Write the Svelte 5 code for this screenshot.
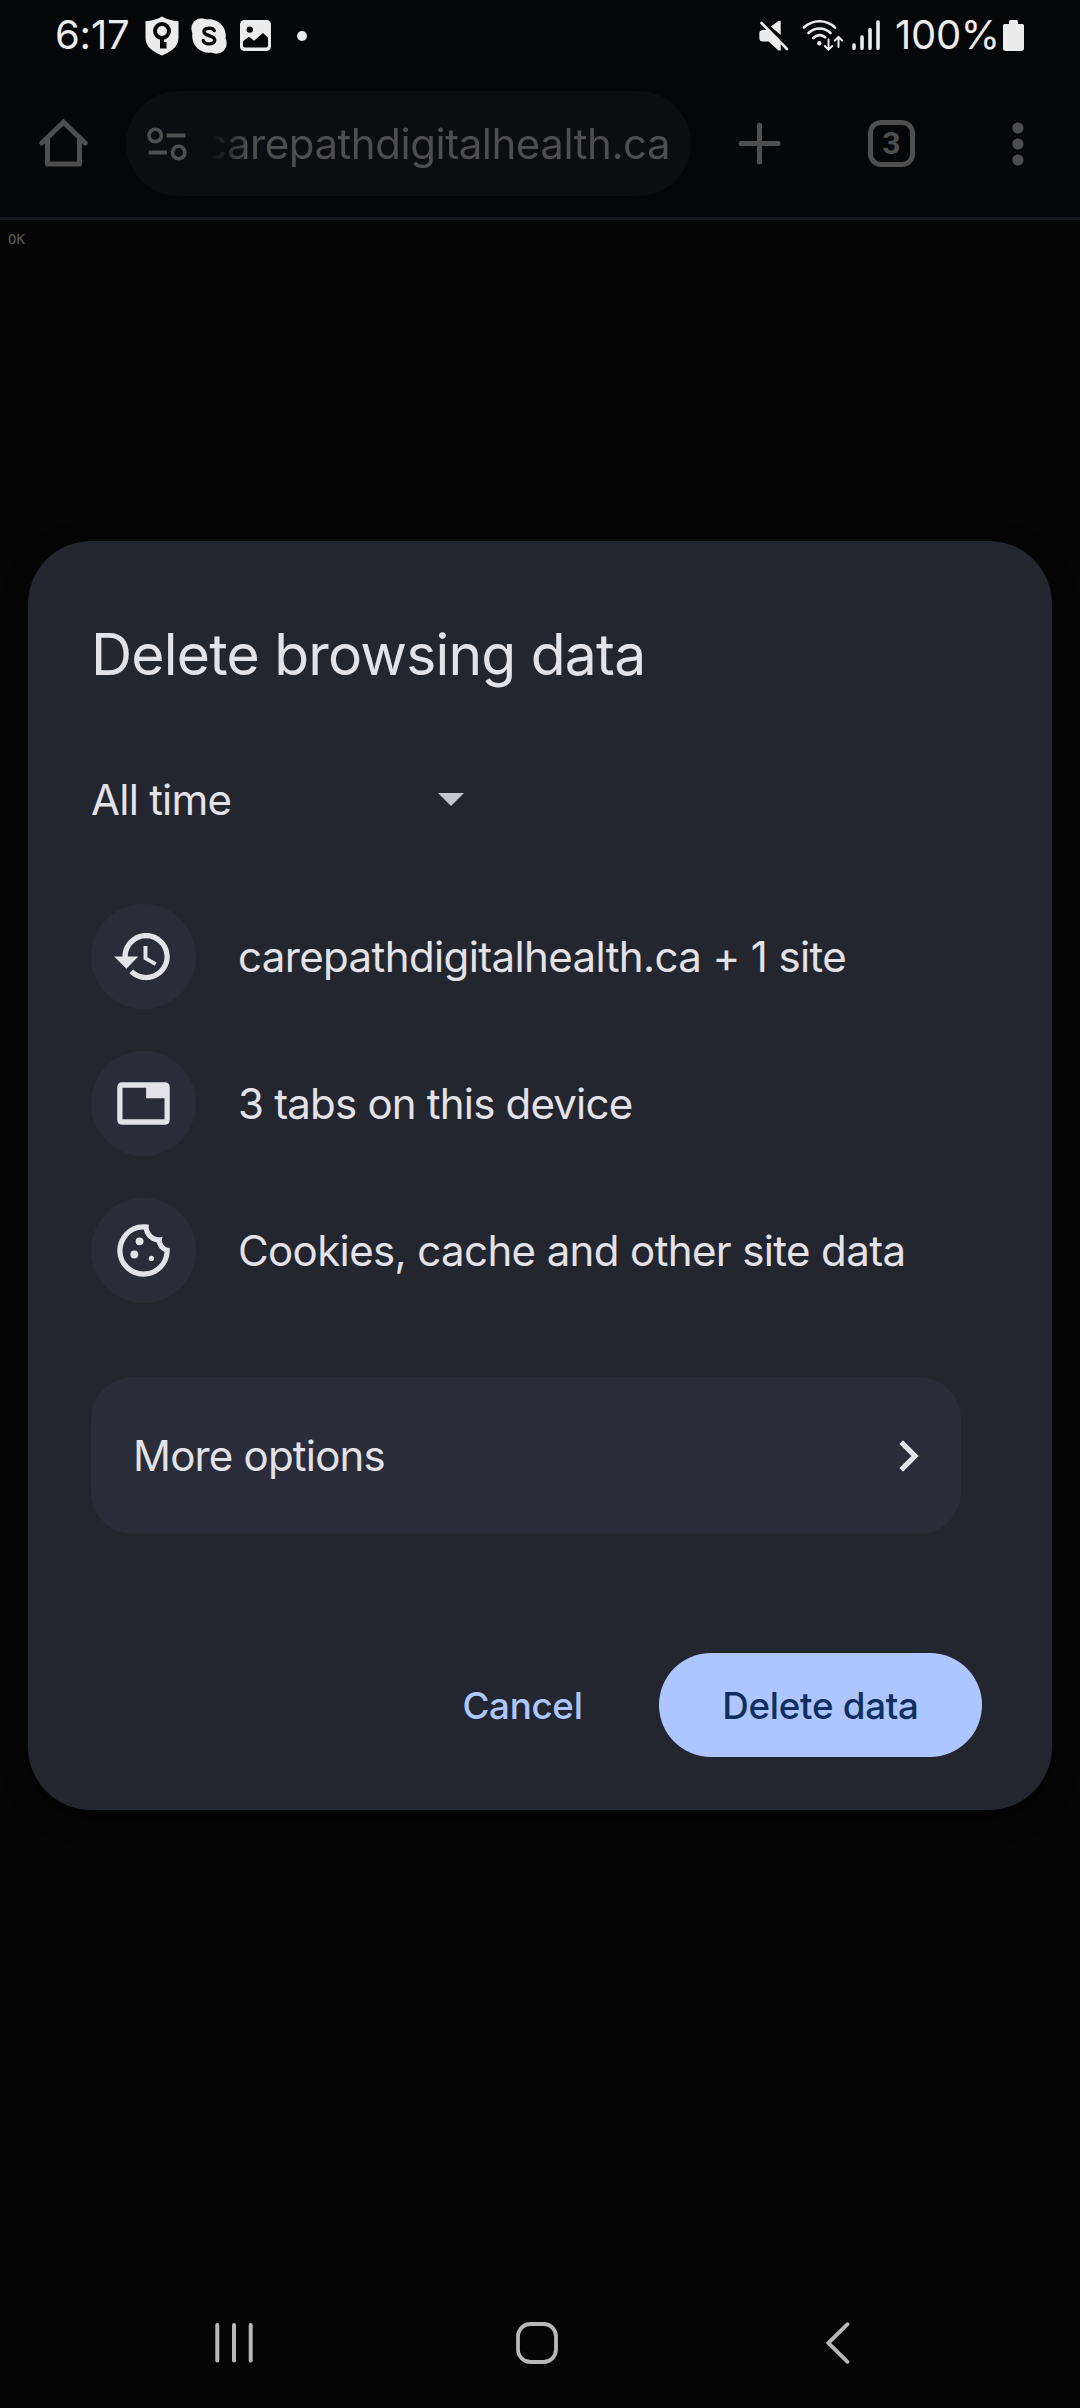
<script>
  const items = [
    { icon: 'history', label: 'carepathdigitalhealth.ca + 1 site' },
    { icon: 'tabs', label: '3 tabs on this device' },
    { icon: 'cookie', label: 'Cookies, cache and other site data' }
  ];
</script>

<div class="screen">
  <header class="status">
    <span class="clock">6:17</span>
    <svg class="shield" width="34" height="40" viewBox="0 0 34 40">
      <path fill="#ececec" d="M17 .5C12 3.4 6.500 4.800.5 5.200V22c0 8.500 7 13.500 16.500 17.500C26.500 35.500 33.500 30.500 33.500 22V5.200C27.500 4.800 22 3.400 17 .5z" />
      <circle cx="17" cy="15" r="7" fill="#ececec" stroke="#050608" stroke-width="4" />
      <path fill="#050608" d="M15 22h4v4h2.500v6.500h-6.500z" />
    </svg>
    <span class="skype">
      <svg width="36" height="36" viewBox="0 0 36 36">
        <g fill="#ececec">
          <circle cx="10.500" cy="10.500" r="10.200" />
          <circle cx="25.500" cy="25.500" r="10.200" />
          <circle cx="18" cy="18" r="16.800" />
        </g>
        <path fill="none" stroke="#050608" stroke-width="3.400" stroke-linecap="round" d="M23.300 12.600C22 9.400 13 9.100 13 13.800C13 18.500 23.700 16.700 23.700 22C23.700 27 13.800 27 12.300 22.700" />
      </svg>
    </span>
    <svg class="photo" width="31" height="31" viewBox="0 0 31 31">
      <rect width="31" height="31" rx="4.500" fill="#ececec" />
      <circle cx="9.800" cy="9.600" r="3.200" fill="#050608" />
      <path fill="#050608" d="M3 21.300L9 16.800L14 20.800L23 13L28 17.800V25.500Q28 27.500 26 27.500H5Q3 27.500 3 25.500z" />
    </svg>
    <i class="dot"></i>
    <svg class="mute" width="30" height="32" viewBox="0 0 30 32">
      <path fill="#ececec" d="M21.700.8V15L11.800 6.600L19.500.9zM.3 13.500Q.3 10 4 10H8L21.700 23V30.500H19.500L9.500 21.500H4Q.3 21.500.3 18z" />
      <path stroke="#050608" stroke-width="2" d="M4 1.500L30.500 28" />
      <path stroke="#ececec" stroke-width="2.600" stroke-linecap="round" d="M2.500 3L28 29" />
    </svg>
    <svg class="wifi" width="42" height="34" viewBox="0 0 42 34">
      <g fill="none" stroke="#ececec" stroke-linecap="round">
        <path stroke-width="2.600" d="M2 8.500C11 .2 24 .2 33 8.500M6.500 14C13 8 22 8 28.500 14M11.300 19C15 15.300 20 15.300 23.200 18.300" />
        <path stroke-width="2" d="M26.500 20.500V30M22.800 27L26.500 30.600L30.200 27M36.500 28V18.500M32.800 21.500L36.500 18L40.200 21.500" />
      </g>
      <circle cx="17.300" cy="24.300" r="2.200" fill="#ececec" />
    </svg>
    <svg class="signal" width="28" height="31" viewBox="0 0 28 31">
      <path stroke="#ececec" stroke-width="3.600" stroke-linecap="round" d="M2 25V28.200M10 17V28.200M18 9.500V28.200M26 2V28.200" />
    </svg>
    <span class="level">100%</span>
    <svg class="battery" width="21" height="31" viewBox="0 0 21 31">
      <path fill="#ececec" d="M6 1.500Q6 0 7.500 0H13.500Q15 0 15 1.500V4H19.500Q21 4 21 5.500V28Q21 31 18 31H3Q0 31 0 28V5.500Q0 4 1.500 4H6z" />
    </svg>
  </header>

  <nav class="toolbar">
    <svg class="home" width="49" height="49" viewBox="0 0 49 49" fill="none" stroke="#4e4e4e" stroke-width="5">
      <path stroke-linecap="round" d="M2.800 24L24.500 3.200L46.200 24" />
      <path stroke-linejoin="round" d="M8.500 19V45H40.500V19" />
    </svg>
    <div class="omnibox">
      <svg width="40" height="34" viewBox="0 0 40 34" fill="none" stroke="#4e4e4e">
        <circle cx="8.200" cy="8.500" r="6.200" stroke-width="3.600" />
        <circle cx="31.700" cy="25.500" r="6.200" stroke-width="3.600" />
        <path stroke-width="4" d="M19.500 8.500H38.500M1.500 25.500H20" />
      </svg>
      <span class="url">carepathdigitalhealth.ca</span>
    </div>
    <svg class="plus" width="43" height="43" viewBox="0 0 43 43">
      <path stroke="#4e4e4e" stroke-width="5" stroke-linecap="round" d="M21.500 3V40M3 21.500H40" />
    </svg>
    <span class="count">3</span>
    <svg class="dots" width="12" height="44" viewBox="0 0 12 44" fill="#4e4e4e">
      <circle cx="6" cy="6" r="5.600" /><circle cx="6" cy="22" r="5.600" /><circle cx="6" cy="38" r="5.600" />
    </svg>
  </nav>

  <main>
    <p class="page-text">OK</p>
    <section class="dialog">
      <h1>Delete browsing data</h1>
      <div class="range">
        <span>All time</span>
        <svg width="26" height="13" viewBox="0 0 26 13"><path fill="#c3c6d0" d="M0 0H26L13 13z" /></svg>
      </div>
      <ul>
        {#each items as item}
          <li>
            <span class="badge">
              <svg width="63" height="63" viewBox="0 0 24 24" fill="#e3e2e8">
                {#if item.icon === 'history'}
                  <path d="M13 3c-4.970 0-9 4.030-9 9H.8l4.700 4.700L10 12H6c0-3.870 3.130-7 7-7s7 3.130 7 7-3.130 7-7 7c-1.930 0-3.680-.790-4.940-2.060l-1.420 1.420C8.270 19.990 10.510 21 13 21c4.970 0 9-4.030 9-9s-4.030-9-9-9zm-1 5v5l4.280 2.540.720-1.210-3.500-2.080V8H12z" />
                {:else if item.icon === 'tabs'}
                  <path fill-rule="evenodd" d="M4 3.900H20Q22 3.900 22 5.900V18.100Q22 20.100 20 20.100H4Q2 20.100 2 18.100V5.900Q2 3.900 4 3.900zM4 6V18H20V10H13V6z" />
                {:else}
                  <g transform="translate(0 24) scale(.025)">
                    <path d="M480-80q-83 0-156-31.500T197-197q-54-54-85.500-127T80-480q0-75 29-147t81-128.500q52-56.500 125-91T475-881q21 0 43 2t45 7q-9 45 6 85t45 66.500q30 26.500 71.500 36.500t85.500-5q-26 59 7.500 113t99.500 56q1 11 1.500 20.500t.5 20.500q0 82-31.500 154.500t-85.500 127q-54 54.500-127 86T480-80Zm0-80q122 0 216.500-84T800-458q-50-22-78.500-60T683-603q-77-11-132-66t-68-132q-80-2-140.500 29t-101 79.500Q201-644 180.500-587T160-480q0 133 93.500 226.500T480-160Z" />
                    <circle cx="420" cy="-620" r="60" /><circle cx="340" cy="-420" r="60" /><circle cx="600" cy="-360" r="40" />
                  </g>
                {/if}
              </svg>
            </span>
            <span class="label {item.icon}">{item.label}</span>
          </li>
        {/each}
      </ul>
      <button class="more">
        <span>More options</span>
        <svg width="20" height="32" viewBox="0 0 20 32"><path fill="none" stroke="#e3e2e8" stroke-width="5.200" d="M2.200 2.200L16 16L2.200 29.800" /></svg>
      </button>
      <div class="actions">
        <button class="cancel">Cancel</button>
        <button class="confirm">Delete data</button>
      </div>
    </section>
  </main>

  <footer>
    <svg class="recents" width="38" height="42" viewBox="0 0 38 42"><path stroke="#b8b8b8" stroke-width="4" stroke-linecap="round" d="M2.300 3V38.500M19 3V38.500M35.700 3V38.500" /></svg>
    <svg class="circle" width="42" height="42" viewBox="0 0 42 42"><rect x="2" y="2" width="38" height="38" rx="12.500" fill="none" stroke="#b8b8b8" stroke-width="3.800" /></svg>
    <svg class="back" width="24" height="42" viewBox="0 0 24 42"><path fill="none" stroke="#b8b8b8" stroke-width="3.800" stroke-linecap="round" d="M21.500 2.200L2.500 21L21.500 39.800" /></svg>
  </footer>
</div>

<style>
  :global(body) { background: #050505; }
  .screen {
    width: 1080px; height: 2408px; display: flex; flex-direction: column; overflow: hidden;
    background: #050505; color: #e3e2e8; font-family: Inter, Roboto, sans-serif; box-sizing: border-box;
  }
  .screen * { box-sizing: border-box; }
  svg { display: block; flex: none; }
  button { font: inherit; color: inherit; border: 0; margin: 0; padding: 0; background: none; }

  .status {
    height: 71px; padding-left: 55px; display: flex; align-items: center; flex: none;
    background: #050608; color: #ececec; font-size: 40px; line-height: 69px;
  }
  .clock, .level { height: 71px; }
  .clock { width: 90px; letter-spacing: -0.2px; }
  .skype { margin-left: 12px; }
  .photo { margin-left: 13px; }
  .dot { width: 10px; height: 10px; border-radius: 50%; background: #ececec; margin: 0 452px 0 26px; }
  .wifi { margin-left: 13px; }
  .signal { margin-left: 8px; }
  .level { margin-left: 15px; width: 108px; letter-spacing: -0.3px; }

  .toolbar {
    height: 149px; padding: 0 56px 1px 39px; display: flex; align-items: center; flex: none;
    background: #050608; border-bottom: 3px solid #17181b;
  }
  .omnibox {
    width: 565px; height: 105px; margin-left: 38px; padding-left: 21px; border-radius: 53px;
    display: flex; align-items: center; background: #0c0d11;
  }
  .url {
    margin-left: 16px; font-size: 42px; letter-spacing: -0.46px; white-space: nowrap;
    background: linear-gradient(90deg, #4e4e4e00 8px, #4e4e4e 44px); background-clip: text; color: transparent;
  }
  .plus { margin-left: 47px; }
  .count {
    width: 47px; height: 47px; margin-left: 87px; border: 5px solid #4e4e4e; border-radius: 13px;
    color: #4e4e4e; font: 700 32px/37px Roboto, sans-serif; text-align: center;
  }
  .dots { margin-left: 96.500px; }

  main { flex: 1; padding: 0 28px; }
  .page-text { height: 321px; margin: 0 -20px; padding-top: 11px; font: 14px/17px 'DejaVu Sans Mono', monospace; color: #5a5a5a; }
  .dialog {
    height: 1269px; padding: 84px 70px 0 63px; border-radius: 63px; background: #24262f;
    box-shadow: 0 8px 24px #00000080;
  }
  h1 { margin: 0; font-weight: 400; font-size: 57px; line-height: 60px; letter-spacing: -0.8px; }
  .range { width: 373px; height: 60px; margin-top: 84px; display: flex; align-items: center; justify-content: space-between; font-size: 42px; letter-spacing: -0.75px; }
  ul { list-style: none; margin: 75px 0 0; padding: 0; display: flex; flex-direction: column; gap: 42px; }
  li { display: flex; align-items: center; gap: 42px; height: 105px; }
  .badge { width: 105px; height: 105px; border-radius: 50%; background: #2a2d39; display: grid; place-items: center; }
  .label { font-size: 42px; white-space: nowrap; letter-spacing: -0.62px; }
  .label.tabs { letter-spacing: -0.8px; }
  .more {
    width: 870px; height: 157px; margin-top: 74px; padding: 0 42px; border-radius: 42px; background: #2a2d39;
    display: flex; align-items: center; justify-content: space-between; font-size: 42px; letter-spacing: -0.8px;
  }
  .actions { margin-top: 119px; height: 104px; display: flex; justify-content: flex-end; font-size: 36.750px; font-weight: 500; }
  .cancel { width: 195px; margin-right: 39px; color: #adc6ff; letter-spacing: -0.3px; }
  .confirm { width: 323px; border-radius: 52px; background: #adc6ff; color: #102f60; letter-spacing: -0.3px; }

  footer { height: 130px; padding: 0 230px 0 215px; display: flex; align-items: center; justify-content: space-between; flex: none; }
  .circle { margin-right: 6px; }
</style>
